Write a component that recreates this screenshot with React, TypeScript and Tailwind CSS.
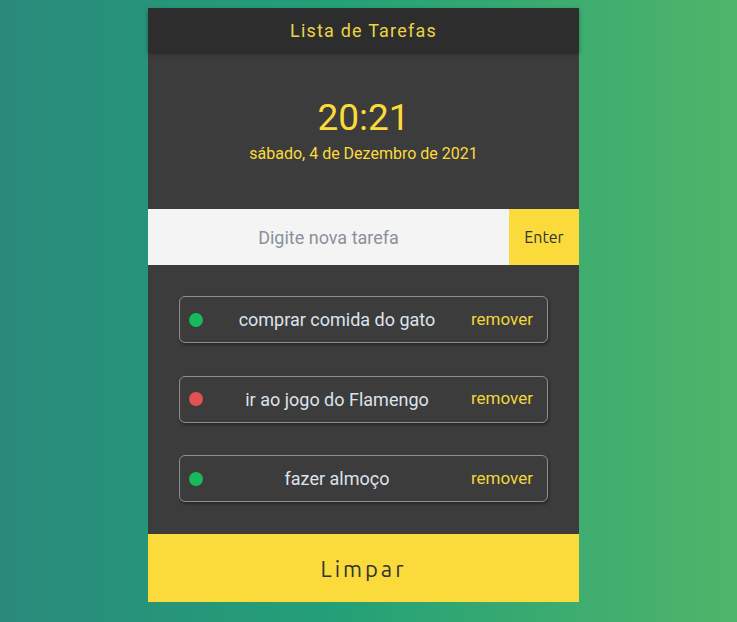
import { useState } from 'react'

type Task = { id: number; text: string; done: boolean }

const initialTasks: Task[] = [
  { id: 1, text: 'comprar comida do gato', done: true },
  { id: 2, text: 'ir ao jogo do Flamengo', done: false },
  { id: 3, text: 'fazer almoço', done: true },
]

function TaskItem({ task, onRemove }: { task: Task; onRemove: (id: number) => void }) {
  return (
    <div className="flex items-center h-[47px] pl-[9px] pr-[14px] border border-[#8e8e8e] rounded-[6px] shadow-[1px_2px_3px_rgba(0,0,0,0.35)]">
      <span
        className={`w-[14px] h-[14px] rounded-full shrink-0 ${
          task.done ? 'bg-[#16b95b]' : 'bg-[#e25252]'
        }`}
      />
      <span className="flex-1 text-center text-[18px] text-[#dde3ec]">{task.text}</span>
      <button onClick={() => onRemove(task.id)} className="text-[17px] text-[#f3d53a]">
        remover
      </button>
    </div>
  )
}

export default function App() {
  const [tasks, setTasks] = useState<Task[]>(initialTasks)
  const [value, setValue] = useState('')

  const addTask = () => {
    if (!value.trim()) return
    setTasks([...tasks, { id: Date.now(), text: value.trim(), done: false }])
    setValue('')
  }

  return (
    <div
      className="min-h-[622px] w-full pt-2 bg-[linear-gradient(to_right,#2a8a7c_0%,#23a077_45%,#4fb56a_100%)]"
      style={{ fontFamily: 'Roboto, "Noto Sans", sans-serif' }}
    >
      <div className="w-[431px] ml-[148px] bg-[#3c3c3c]">
        {/* Header */}
        <div className="h-[44px] flex items-center justify-center bg-[#2d2d2d] shadow-[0_2px_4px_rgba(0,0,0,0.35)] relative">
          <h1 className="text-[18px] tracking-[1.2px] text-[#ecd444]">Lista de Tarefas</h1>
        </div>

        {/* Clock */}
        <div className="h-[157px] flex flex-col items-center justify-center text-[#fbdb3b]">
          <div className="text-[37px] leading-[40px]">20:21</div>
          <div className="text-[16px] leading-[20px] mt-[6px]">sábado, 4 de Dezembro de 2021</div>
        </div>

        {/* Input */}
        <div className="flex h-[56px]">
          <input
            type="text"
            placeholder="Digite nova tarefa"
            value={value}
            onChange={(e) => setValue(e.target.value)}
            onKeyDown={(e) => e.key === 'Enter' && addTask()}
            className="flex-1 min-w-0 bg-[#f4f4f4] text-center text-[18px] text-[#333] placeholder:text-[#8b9099] outline-none"
          />
          <button
            onClick={addTask}
            className="w-[70px] bg-[#fbdb3b] text-[16px] text-[#333]"
            style={{ fontFamily: 'Ubuntu, "Open Sans", sans-serif' }}
          >
            Enter
          </button>
        </div>

        {/* Tasks */}
        <div className="flex flex-col gap-[32.5px] px-[31px] pt-[31px] pb-[32px]">
          {tasks.map((t) => (
            <TaskItem key={t.id} task={t} onRemove={(id) => setTasks(tasks.filter((x) => x.id !== id))} />
          ))}
        </div>

        {/* Clear */}
        <button
          onClick={() => setTasks([])}
          className="w-full h-[68px] bg-[#fbdb3b] text-[22px] tracking-[3px] text-[#333]"
          style={{ fontFamily: 'Ubuntu, "Open Sans", sans-serif' }}
        >
          Limpar
        </button>
      </div>
    </div>
  )
}
